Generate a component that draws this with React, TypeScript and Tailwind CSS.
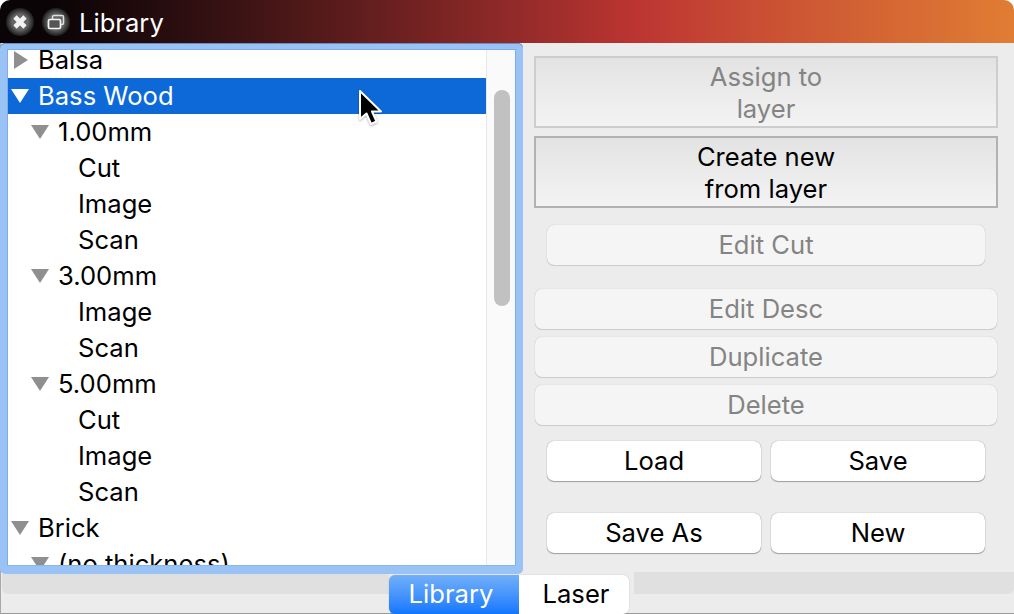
import React from "react";

const font = { fontFamily: '"Inter", "Liberation Sans", sans-serif' };

function Tri({ open, color }: { open: boolean; color: string }) {
  return (
    <svg width="18" height="18" viewBox="0 0 18 18" className="shrink-0">
      {open ? <polygon points="0,2 18,2 9,16" fill={color} /> : <polygon points="3,0 17,9 3,18" fill={color} />}
    </svg>
  );
}

function Row({ label, depth, tri, open, selected }: { label: string; depth: 0 | 1 | 2; tri?: boolean; open?: boolean; selected?: boolean }) {
  const pad = depth === 0 ? "pl-[3px]" : depth === 1 ? "pl-[23px]" : "pl-[70px]";
  return (
    <div className={`h-9 shrink-0 flex items-center ${pad} ${selected ? "bg-[#0e69d8] text-white" : "text-black"}`}>
      {tri && <Tri open={!!open} color={selected ? "#ffffff" : "#8f8f8f"} />}
      <span className={tri ? "ml-[9px]" : ""}>{label}</span>
    </div>
  );
}

function GrayBtn({ children, active }: { children: React.ReactNode; active?: boolean }) {
  return (
    <div
      className={`h-[72px] flex flex-col items-center justify-center pt-[2px] leading-8 bg-gradient-to-b from-[#e3e3e3] to-[#f3f3f3] border-2 ${
        active ? "border-[#b2b2b2] text-black" : "border-[#cdcdcd] text-[#848484]"
      }`}
    >
      {children}
    </div>
  );
}

function Btn({ label, disabled, className }: { label: string; disabled?: boolean; className?: string }) {
  return (
    <div
      className={`h-10 flex items-center justify-center rounded-[7px] ${
        disabled
          ? "bg-[#f5f5f5] text-[#848484] shadow-[0_1px_1px_rgba(0,0,0,0.12),0_0_1px_rgba(0,0,0,0.25)]"
          : "bg-white text-black shadow-[0_1px_1px_rgba(0,0,0,0.3),0_0_1px_rgba(0,0,0,0.45)]"
      } ${className ?? ""}`}
    >
      {label}
    </div>
  );
}

export default function App() {
  return (
    <div className="relative w-[1014px] h-[614px] overflow-hidden flex flex-col bg-white text-[25.6px]" style={font}>
      <div className="h-[43px] shrink-0 flex items-center rounded-t-[10px] pl-[6px] bg-gradient-to-r from-[#0a0406] from-5% via-[#bd3532] via-63% to-[#e07d33]">
        <svg width="28" height="28" viewBox="0 0 28 28" className="shrink-0">
          <defs>
            <radialGradient id="g1">
              <stop offset="0.55" stopColor="#666666" />
              <stop offset="1" stopColor="#1c1c1c" />
            </radialGradient>
          </defs>
          <circle cx="14" cy="14" r="14" fill="url(#g1)" />
          <path d="M9 9 19 19M19 9 9 19" stroke="#f2f2f2" strokeWidth="4.6" />
        </svg>
        <svg width="28" height="28" viewBox="0 0 28 28" className="shrink-0 ml-[8px]">
          <circle cx="14" cy="14" r="14" fill="url(#g1)" />
          <rect x="10.5" y="7.5" width="11" height="9" rx="1.5" fill="none" stroke="#e0e0e0" strokeWidth="1.5" />
          <rect x="6.5" y="11.5" width="12" height="9" rx="1.5" fill="#555555" stroke="#f4f4f4" strokeWidth="1.7" />
        </svg>
        <span className="ml-[9px] pt-[3px] text-white">Library</span>
      </div>

      <div className="flex-1 min-h-0 flex flex-col bg-[#ececec] border-l border-[#a8a8a8]">
        <div className="h-[531px] shrink-0 flex">
          <div className="w-[522px] shrink-0 -ml-px pl-px">
            <div className="w-[523px] h-[531px] -ml-px rounded-[5px] bg-[#9ac3f5] p-[6px_7px_8px_7px] shadow-[inset_0_1px_0_#6b8cc0]">
              <div className="h-full border border-[#7fade8] border-b-[#8ab6ee] bg-white flex overflow-hidden">
                <div className="flex-1 min-w-0 flex flex-col overflow-hidden -mt-[8px]">
                  <Row label="Balsa" depth={0} tri />
                  <Row label="Bass Wood" depth={0} tri open selected />
                  <Row label="1.00mm" depth={1} tri open />
                  <Row label="Cut" depth={2} />
                  <Row label="Image" depth={2} />
                  <Row label="Scan" depth={2} />
                  <Row label="3.00mm" depth={1} tri open />
                  <Row label="Image" depth={2} />
                  <Row label="Scan" depth={2} />
                  <Row label="5.00mm" depth={1} tri open />
                  <Row label="Cut" depth={2} />
                  <Row label="Image" depth={2} />
                  <Row label="Scan" depth={2} />
                  <Row label="Brick" depth={0} tri open />
                  <Row label="(no thickness)" depth={1} tri open />
                </div>
                <div className="w-[29px] shrink-0 bg-[#fafafa] border-l border-[#e8e8e8] pl-[7px] pt-[40px]">
                  <div className="w-4 h-[216px] rounded-full bg-[#c1c1c1]" />
                </div>
              </div>
            </div>
          </div>

          <div className="flex-1 min-w-0 flex flex-col pt-[13px] pl-[12px] pr-[16px]">
            <GrayBtn>
              <span>Assign to</span>
              <span>layer</span>
            </GrayBtn>
            <div className="mt-2">
              <GrayBtn active>
                <span>Create new</span>
                <span>from layer</span>
              </GrayBtn>
            </div>
            <Btn label="Edit Cut" disabled className="mt-[17px] mx-[13px]" />
            <Btn label="Edit Desc" disabled className="mt-[24px] mx-px" />
            <Btn label="Duplicate" disabled className="mt-2 mx-px" />
            <Btn label="Delete" disabled className="mt-2 mx-px" />
            <div className="mt-4 mx-[13px] grid grid-cols-2 gap-x-[10px] gap-y-8">
              <Btn label="Load" />
              <Btn label="Save" />
              <Btn label="Save As" />
              <Btn label="New" />
            </div>
          </div>
        </div>

        <div className="flex-1 min-h-0 flex items-start border-b border-[#9a9a9a]">
          <div className="w-[387px] shrink-0 h-5 ml-px rounded-bl-[6px] bg-[#e0e0e0]" />
          <div className="h-[39px] mt-px w-[240px] shrink-0 flex rounded-[6px] overflow-hidden shadow-[0_0_1px_rgba(0,0,0,0.4)]">
            <div className="w-[130px] flex items-center justify-center pr-[6px] text-white bg-gradient-to-b from-[#71b0f9] to-[#0f76fd]">Library</div>
            <div className="flex-1 flex items-center justify-center pl-[4px] bg-white text-black">Laser</div>
          </div>
          <div className="flex-1 ml-[5px] h-[22px] -mt-[2px] rounded-br-[6px] bg-[#e0e0e0]" />
        </div>
      </div>

      <svg width="26" height="38" viewBox="0 0 26 38" className="absolute left-[358px] top-[90px] drop-shadow-[0_1px_1px_rgba(0,0,0,0.3)]">
        <path d="M2 1 V29 L8.5 23.5 L13 34 L18.5 31.5 L14 21.5 H23 Z" fill="#000" stroke="#fff" strokeWidth="2" strokeLinejoin="round" />
      </svg>
    </div>
  );
}
